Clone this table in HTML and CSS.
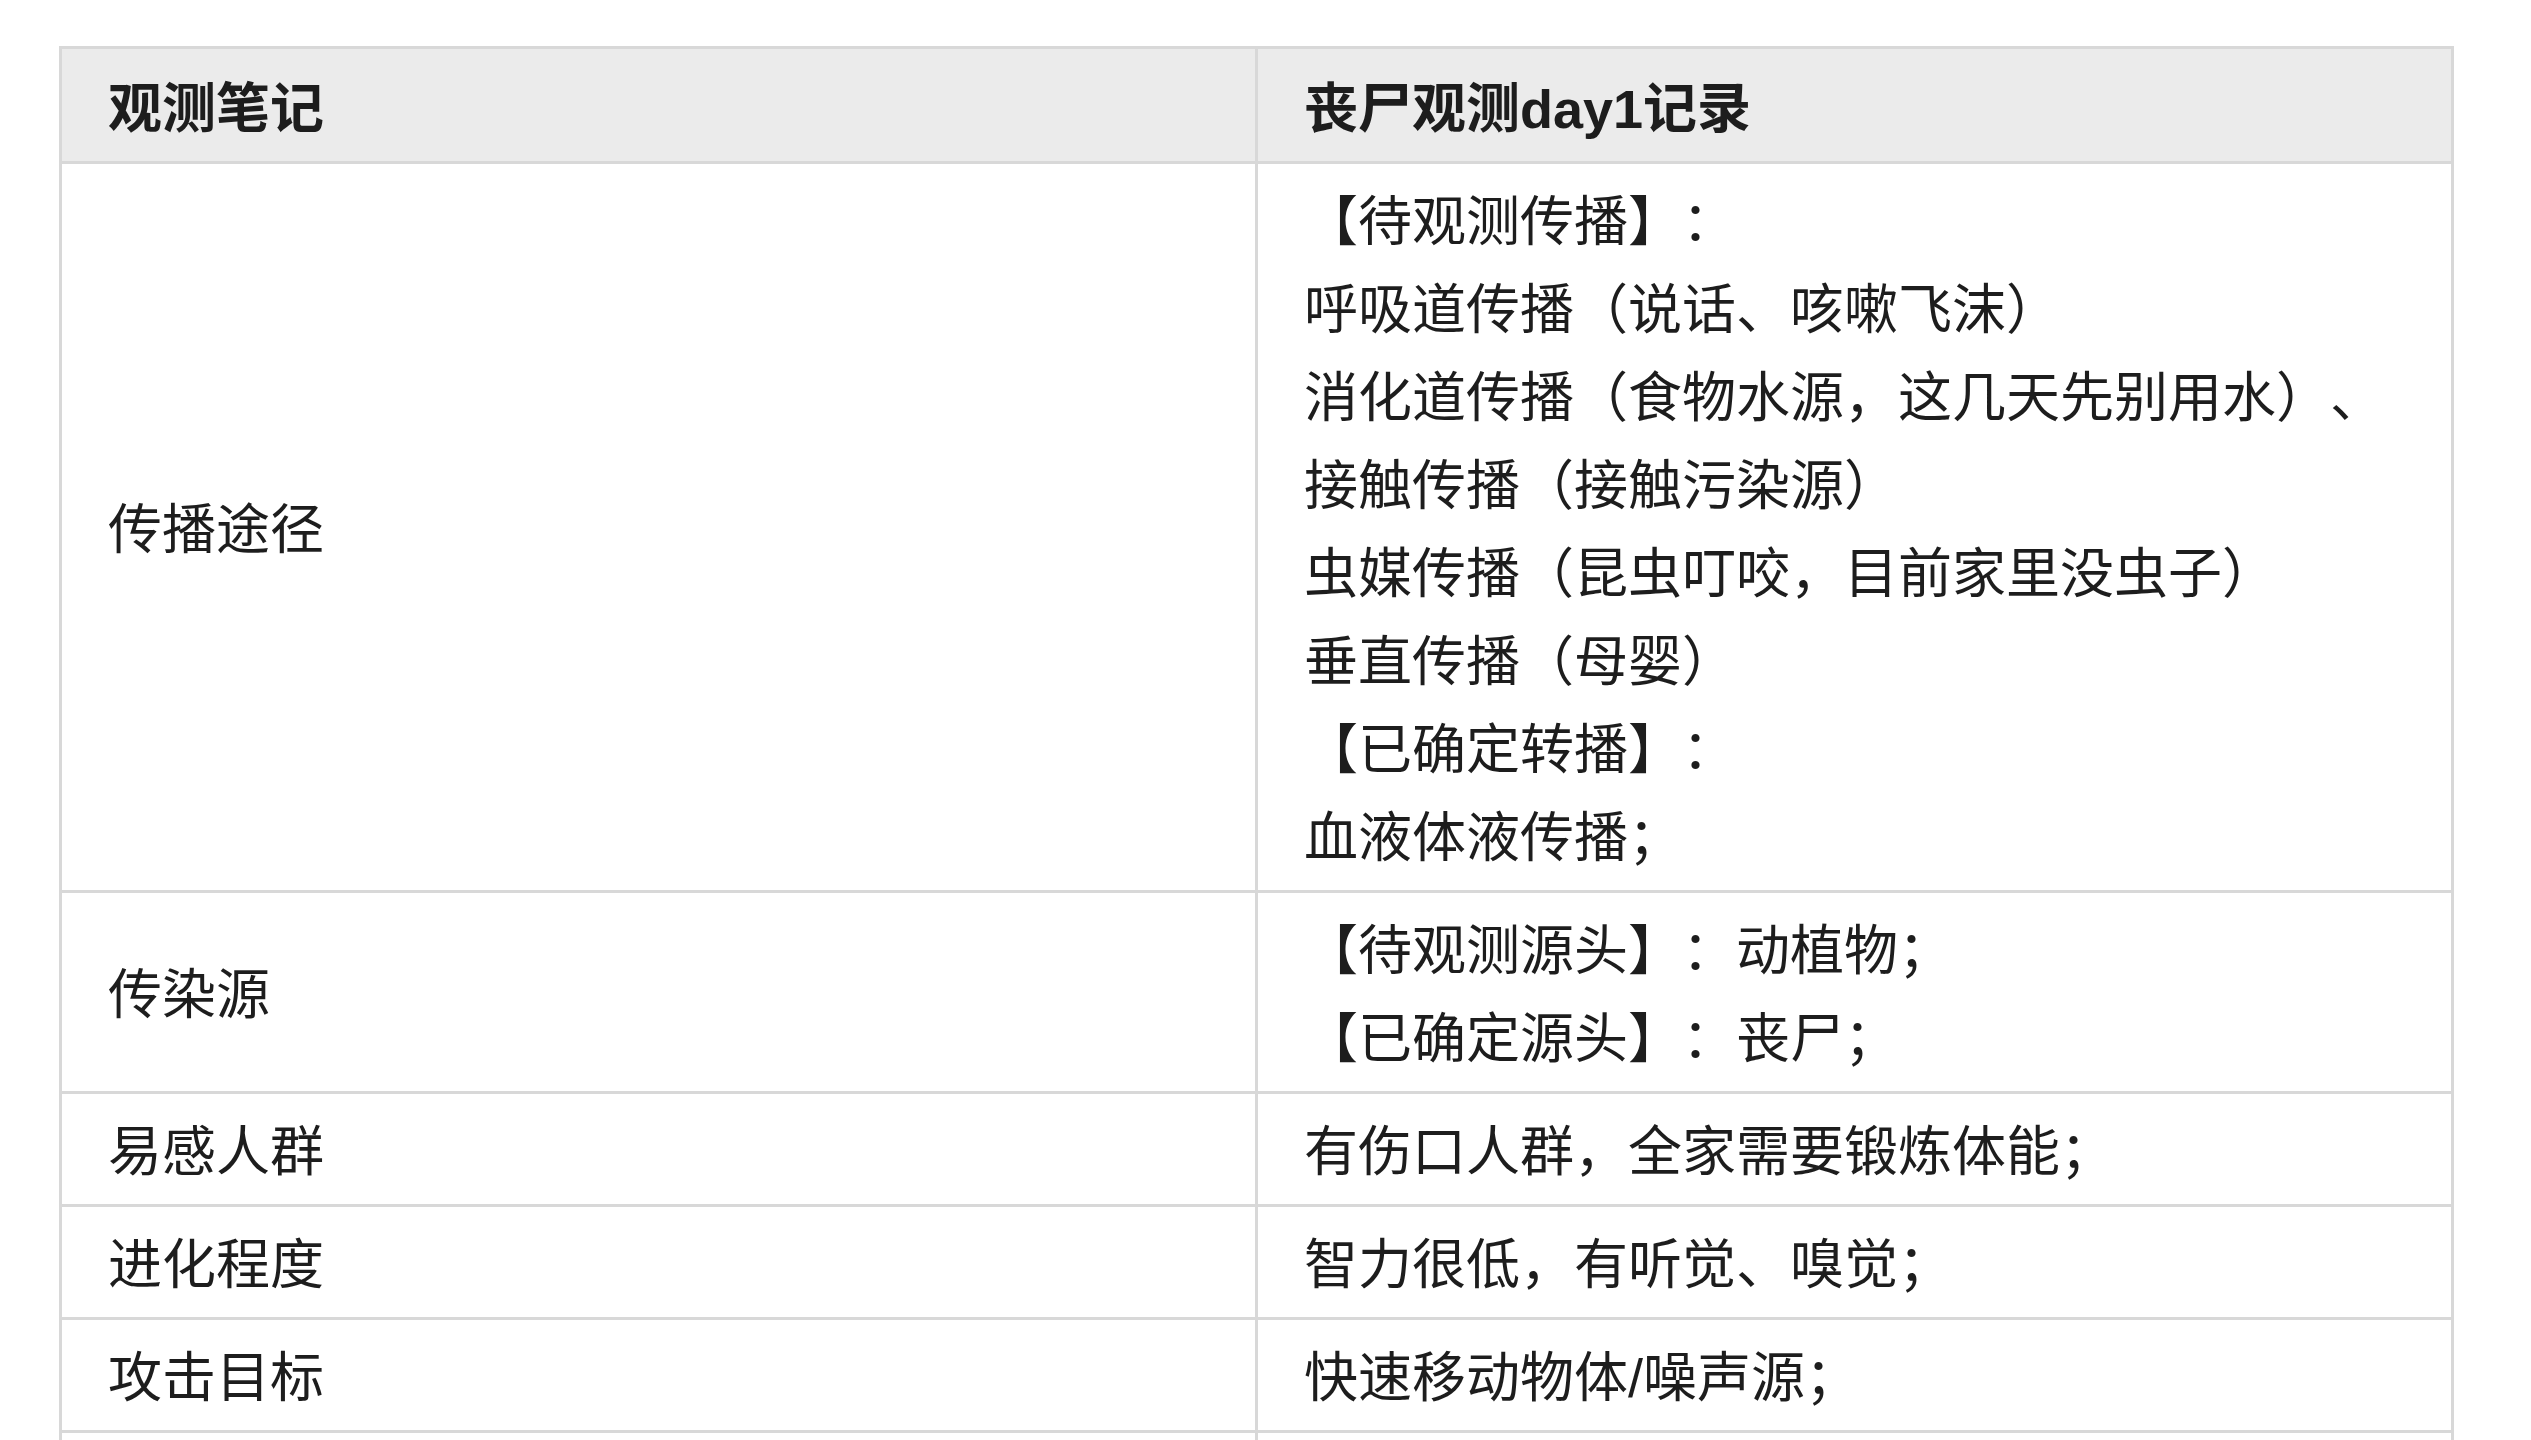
FILE: index.html
```html
<!DOCTYPE html>
<html lang="zh-CN">
<head>
<meta charset="utf-8">
<title>观测笔记</title>
<link rel="stylesheet" href="styles.css">
</head>
<body>
<div class="page">
  <table class="notes">
    <thead>
      <tr>
        <th>观测笔记</th>
        <th>丧尸观测day1记录</th>
      </tr>
    </thead>
    <tbody>
      <tr>
        <td class="label">传播途径</td>
        <td>
          <div>【待观测传播】：</div>
          <div>呼吸道传播（说话、咳嗽飞沫）</div>
          <div>消化道传播（食物水源，这几天先别用水）、</div>
          <div>接触传播（接触污染源）</div>
          <div>虫媒传播（昆虫叮咬，目前家里没虫子）</div>
          <div>垂直传播（母婴）</div>
          <div>【已确定转播】：</div>
          <div>血液体液传播；</div>
        </td>
      </tr>
      <tr>
        <td class="label">传染源</td>
        <td>
          <div>【待观测源头】：动植物；</div>
          <div>【已确定源头】：丧尸；</div>
        </td>
      </tr>
      <tr>
        <td class="label">易感人群</td>
        <td>有伤口人群，全家需要锻炼体能；</td>
      </tr>
      <tr>
        <td class="label">进化程度</td>
        <td>智力很低，有听觉、嗅觉；</td>
      </tr>
      <tr>
        <td class="label">攻击目标</td>
        <td>快速移动物体/噪声源；</td>
      </tr>
      <tr>
        <td class="label">&nbsp;</td>
        <td>&nbsp;</td>
      </tr>
    </tbody>
  </table>
</div>
</body>
</html>
```

FILE: styles.css
```css
html, body {
  margin: 0;
  padding: 0;
  background: #ffffff;
}

body {
  font-family: "Liberation Sans", "Noto Sans CJK SC", sans-serif;
  color: #1d1d1d;
  overflow: hidden;
  height: 1440px;
}

.page {
  padding: 46px 0 0 59px;
}

.notes {
  width: 2395px;
  border-collapse: collapse;
  table-layout: fixed;
  font-size: 54px;
  line-height: 88px;
  text-spacing-trim: space-all;
}

.notes th,
.notes td {
  border: 3px solid #d8d8d8;
  text-align: left;
  vertical-align: middle;
  padding: 14px 46px 8px 46px;
  width: 50%;
}

.notes th {
  background: #ebebeb;
  font-weight: 700;
  padding-top: 16px;
  padding-bottom: 8px;
}

.notes td {
  font-weight: 400;
}
```
